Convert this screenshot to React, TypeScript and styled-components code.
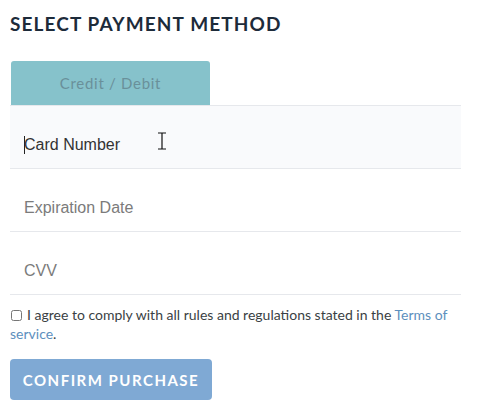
import React from "react";
import styled, { createGlobalStyle } from "styled-components";

const GlobalStyle = createGlobalStyle`
  html, body {
    margin: 0;
    padding: 0;
    background: #ffffff;
  }
  * {
    box-sizing: border-box;
  }
`;

const Page = styled.div`
  width: 480px;
  height: 418px;
  padding: 12px 19px 0 10px;
  font-family: Lato, "Open Sans", sans-serif;
`;

const Title = styled.h2`
  margin: 0;
  font-size: 19px;
  font-weight: 700;
  letter-spacing: 1.1px;
  color: #1d2b3a;
  line-height: 24px;
`;

const Tabs = styled.div`
  display: flex;
  margin-top: 25px;
  border-bottom: 1px solid #e6e8ec;
`;

const Tab = styled.button`
  width: 199px;
  height: 44px;
  margin-left: 1px;
  border: none;
  border-radius: 3px 3px 0 0;
  background: #86c2cb;
  color: #6a909a;
  font-family: Lato, sans-serif;
  font-size: 15px;
  font-weight: 400;
  letter-spacing: 0.7px;
`;

const Fields = styled.div`
  display: flex;
  flex-direction: column;
`;

const FieldRow = styled.div<{ $active?: boolean }>`
  position: relative;
  display: flex;
  align-items: center;
  height: 63px;
  padding-left: 14px;
  padding-top: 16px;
  border-bottom: 1px solid #e6e8ec;
  background: ${(p) => (p.$active ? "#f9fafc" : "#ffffff")};
  font-family: "Liberation Sans", Arial, sans-serif;
  font-size: 16px;
  color: ${(p) => (p.$active ? "#333333" : "#7b7b7b")};
`;

const Caret = styled.span`
  display: inline-block;
  width: 1px;
  height: 18px;
  background: #222;
  margin-right: -1px;
`;

const Pointer = styled.svg`
  position: absolute;
  left: 146px;
  top: 26px;
`;

const Agree = styled.label`
  display: block;
  margin-top: 10px;
  font-size: 14px;
  line-height: 19px;
  color: #3a3f44;
  padding-right: 10px;
`;

const Check = styled.input`
  width: 11px;
  height: 11px;
  margin: 0 5px 0 1px;
  vertical-align: -1px;
`;

const TermsLink = styled.a`
  color: #5d8fbd;
  text-decoration: none;
`;

const Confirm = styled.button`
  display: block;
  margin-top: 16px;
  width: 202px;
  height: 41px;
  border: none;
  border-radius: 4px;
  background: #7fa9d4;
  color: #ffffff;
  font-family: Lato, sans-serif;
  font-size: 15px;
  font-weight: 700;
  letter-spacing: 1.5px;
`;

export default function App() {
  return (
    <>
      <GlobalStyle />
      <Page>
        <Title>SELECT PAYMENT METHOD</Title>
        <Tabs>
          <Tab>Credit / Debit</Tab>
        </Tabs>
        <Fields>
          <FieldRow $active>
            <Caret />
            Card Number
            <Pointer width="12" height="18" viewBox="0 0 12 18">
              <path d="M2 1h8M2 17h8M6 1v16" stroke="#111" strokeWidth="1.2" fill="none" />
            </Pointer>
          </FieldRow>
          <FieldRow>Expiration Date</FieldRow>
          <FieldRow>CVV</FieldRow>
        </Fields>
        <Agree>
          <Check type="checkbox" />I agree to comply with all rules and regulations stated in the{" "}
          <TermsLink href="#">Terms of service</TermsLink>.
        </Agree>
        <Confirm>CONFIRM PURCHASE</Confirm>
      </Page>
    </>
  );
}
